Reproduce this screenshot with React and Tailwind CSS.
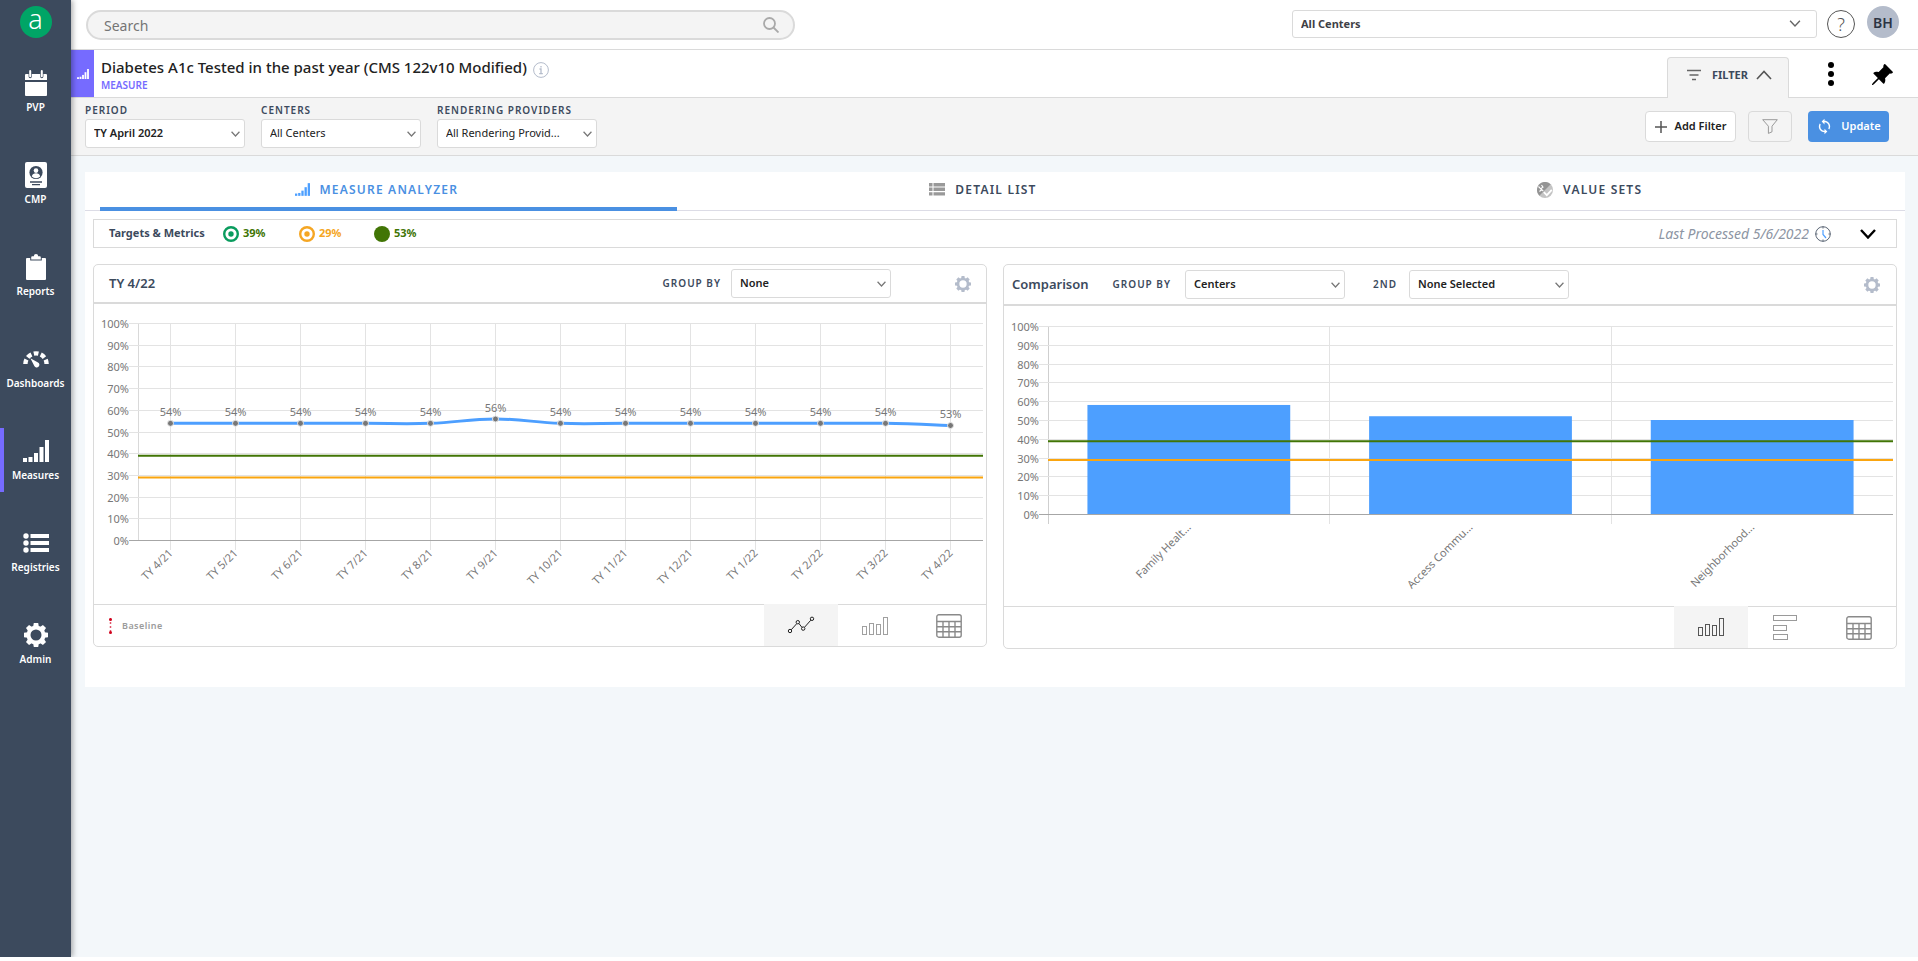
import { useEffect, useRef, useState } from "react";
import { BsPinAngleFill } from "react-icons/bs";
import { MdSync } from "react-icons/md";

/* ---------- icons ---------- */

function SignalIcon({ className }) {
  return (
    <svg viewBox="0 0 26 22" className={className} fill="currentColor" aria-hidden="true">
      <rect x="0" y="18" width="4" height="4" />
      <rect x="5.5" y="17" width="4" height="5" />
      <rect x="11" y="13" width="4" height="9" />
      <rect x="16.5" y="7" width="4" height="15" />
      <rect x="22" y="0" width="4" height="22" />
    </svg>
  );
}

function GearIcon({ className }) {
  return (
    <svg viewBox="0 0 24 24" className={className} fill="currentColor" aria-hidden="true">
      <circle cx="12" cy="12" r="7.5" fill="none" stroke="currentColor" strokeWidth="4" />
      {[0, 45, 90, 135, 180, 225, 270, 315].map((a) => (
        <path key={a} d="M9.2 3.600 9.800 0h4.400l.6 3.600z" transform={`rotate(${a} 12 12)`} />
      ))}
    </svg>
  );
}

function CalendarIcon() {
  return (
    <svg viewBox="0 0 22 26" className="h-[26px] w-[22px]" fill="currentColor" aria-hidden="true">
      <path d="M1 4h2.6v2.6a1.6 1.6 0 0 0 3.2 0V4h8.4v2.6a1.6 1.6 0 0 0 3.2 0V4H21a1 1 0 0 1 1 1v5H0V5a1 1 0 0 1 1-1z" />
      <rect x="4.2" y="0" width="2" height="7.2" rx="1" />
      <rect x="15.8" y="0" width="2" height="7.2" rx="1" />
      <path d="M0 12h22v13a1 1 0 0 1-1 1H1a1 1 0 0 1-1-1z" />
    </svg>
  );
}

function ContactCardIcon() {
  return (
    <svg viewBox="0 0 22 26" className="h-[26px] w-[22px]" aria-hidden="true">
      <rect width="22" height="26" rx="2" fill="currentColor" />
      <circle cx="11" cy="10.5" r="6.6" fill="#3c4a5d" />
      <circle cx="11" cy="8.6" r="2.3" fill="currentColor" />
      <path d="M6.8 14.6c.4-2.4 2-3.4 4.2-3.4s3.8 1 4.2 3.4a6.2 6.2 0 0 1-8.4 0z" fill="currentColor" />
      <path d="M5 20h12M7 22.6h8" stroke="#3c4a5d" strokeWidth="1.3" />
    </svg>
  );
}

function ClipboardIcon() {
  return (
    <svg viewBox="0 0 20 26" className="h-[26px] w-[20px]" fill="currentColor" aria-hidden="true">
      <path d="M1 4h3.2v2.6h11.6V4H19a1 1 0 0 1 1 1v20a1 1 0 0 1-1 1H1a1 1 0 0 1-1-1V5a1 1 0 0 1 1-1z" />
      <path d="M5.2 5.6V3.2a1 1 0 0 1 1-1h1.6a2.2 2.2 0 0 1 4.4 0h1.6a1 1 0 0 1 1 1v2.4z" />
    </svg>
  );
}

function GaugeIcon() {
  return (
    <svg viewBox="0 0 26 20" className="h-[20px] w-[26px]" fill="currentColor" aria-hidden="true">
      <path d="M2.4 15a10.6 10.6 0 0 1 21.200 0" fill="none" stroke="currentColor" strokeWidth="4.4" strokeDasharray="4.700 2.450" />
      <path d="M7.4 9.2l7.6 4.2a2.7 2.7 0 1 1-3.8 3.4z" />
    </svg>
  );
}

function ListIcon() {
  return (
    <svg viewBox="0 0 26 20" className="h-[20px] w-[26px]" fill="currentColor" aria-hidden="true">
      {[3, 10, 17].map((y) => (
        <g key={y}>
          <circle cx="3" cy={y} r="2.7" />
          <rect x="7.5" y={y - 2} width="18.5" height="4" />
        </g>
      ))}
    </svg>
  );
}

function Chevron({ className, up, width = 1.6 }) {
  return (
    <svg viewBox="0 0 16 10" className={className} fill="none" stroke="currentColor" strokeWidth={width} aria-hidden="true">
      <path d={up ? "M1 9l7-7.5L15 9" : "M1 1l7 7.5L15 1"} />
    </svg>
  );
}

function TableIcon() {
  return (
    <svg viewBox="0 0 26 24" className="h-[24px] w-[26px]" fill="none" stroke="#8a8a8a" strokeWidth="1.4" aria-hidden="true">
      <rect x="0.8" y="0.8" width="24.4" height="22.4" rx="2" />
      <path d="M1 7.5h24M1 12.7h24M1 17.8h24M7 7.5V23M13 7.5V23M19 7.5V23" />
    </svg>
  );
}

function ColumnsIcon({ className }) {
  return (
    <svg viewBox="0 0 26 18" className={className} fill="none" stroke="currentColor" strokeWidth="1" aria-hidden="true">
      <rect x="0.5" y="9.5" width="4" height="8" />
      <rect x="7.5" y="6.5" width="4" height="11" />
      <rect x="14.5" y="7.5" width="4" height="10" />
      <rect x="21.5" y="0.5" width="4" height="17" />
    </svg>
  );
}

function RowsIcon() {
  return (
    <svg viewBox="0 0 24 26" className="h-[26px] w-[24px]" fill="none" stroke="#9a9a9a" strokeWidth="1" aria-hidden="true">
      <rect x="0.5" y="0.5" width="23" height="5" />
      <rect x="0.5" y="10.5" width="13" height="5" />
      <rect x="0.5" y="19.5" width="14" height="5" />
    </svg>
  );
}

function LineIcon() {
  return (
    <svg viewBox="0 0 28 18" className="h-[18px] w-[28px]" fill="none" stroke="#222" strokeWidth="1" aria-hidden="true">
      <path d="M4.2 13.800l5.400-6M12 7.600l3 3.800M17.600 11.200l6.200-7" />
      <circle cx="3" cy="15" r="1.700" />
      <circle cx="10.800" cy="6.200" r="1.700" />
      <circle cx="16.200" cy="12.600" r="1.700" />
      <circle cx="25" cy="2.800" r="1.700" />
    </svg>
  );
}

/* ---------- form pieces ---------- */

function SelectBox({ id, value, bold }) {
  return (
    <div className="relative w-[160px]">
      <select
        id={id}
        className={
          "h-[29px] w-full appearance-none truncate rounded-[3px] border border-[#dadada] bg-white pr-7 pl-2 text-[11px] text-[#222] " +
          (bold ? "font-semibold" : "font-normal")
        }
      >
        <option>{value}</option>
      </select>
      <Chevron className="pointer-events-none absolute top-3 right-[5px] h-[6px] w-[9px] text-[#777]" width={2.2} />
    </div>
  );
}

const labelClass = "text-[10px] font-semibold uppercase tracking-widest text-[#3c4a5d]";

function Field({ id, label, value, bold }) {
  return (
    <div className="flex flex-col">
      <label htmlFor={id} className={labelClass + " leading-[15px]"}>
        {label}
      </label>
      <div className="mt-px">
        <SelectBox id={id} value={value} bold={bold} />
      </div>
    </div>
  );
}

/* ---------- charts ---------- */

function useWidth(initial) {
  const ref = useRef(null);
  const [width, setWidth] = useState(initial);
  useEffect(() => {
    const observer = new ResizeObserver(([entry]) => setWidth(Math.round(entry.contentRect.width)));
    observer.observe(ref.current);
    return () => observer.disconnect();
  }, []);
  return [ref, width];
}

const TICKS = [100, 90, 80, 70, 60, 50, 40, 30, 20, 10, 0];
const AXIS = 44;

function Grid({ top, height, right }) {
  return TICKS.map((t) => {
    const y = Math.round(top + (height * (100 - t)) / 100) + 0.5;
    return (
      <g key={t}>
        <path d={`M${AXIS - 9} ${y}H${right}`} stroke={t === 0 ? "#a6a6a6" : "#e3e3e3"} />
        <text x={AXIS - 9} y={y + 4} textAnchor="end">{t}%</text>
      </g>
    );
  });
}

function Targets({ top, height, right }) {
  const at = (v) => top + (height * (100 - v)) / 100;
  return (
    <>
      <path d={`M${AXIS} ${at(39) + 0.5}H${right}`} stroke="#417505" strokeWidth="2" />
      <path d={`M${AXIS} ${at(29) + 0.5}H${right}`} stroke="#faa50f" strokeWidth="2" />
    </>
  );
}

const MONTHS = [
  ["TY 4/21", 54], ["TY 5/21", 54], ["TY 6/21", 54], ["TY 7/21", 54], ["TY 8/21", 54], ["TY 9/21", 56], ["TY 10/21", 54],
  ["TY 11/21", 54], ["TY 12/21", 54], ["TY 1/22", 54], ["TY 2/22", 54], ["TY 3/22", 54], ["TY 4/22", 53],
];

function LineChart() {
  const [ref, width] = useWidth(892);
  const top = 19;
  const height = 217;
  const right = width - 3;
  const step = (right - AXIS) / MONTHS.length;
  const pts = MONTHS.map(([, v], i) => [AXIS + step * (i + 0.5), top + 0.5 + (height * (100 - v)) / 100]);
  const slope = pts.map((p, i) => {
    const a = pts[i - 1] || p;
    const b = pts[i + 1] || p;
    return [(b[0] - a[0]) * 0.2, (b[1] - a[1]) * 0.2];
  });
  let d = `M${pts[0][0]} ${pts[0][1]}`;
  for (let i = 1; i < pts.length; i++) {
    const [a, b, s, e] = [pts[i - 1], pts[i], slope[i - 1], slope[i]];
    d += `C${a[0] + s[0]} ${a[1] + s[1]} ${b[0] - e[0]} ${b[1] - e[1]} ${b[0]} ${b[1]}`;
  }
  return (
    <div ref={ref} className="h-[300px] w-full">
      <svg width="100%" height="300" className="block text-[11px]" fill="#777777" role="img" aria-label="Measure trend by trailing year">
        <path d={`M${AXIS + 0.5} ${top}V${top + height}`} stroke="#d9d9d9" />
        {pts.map(([x]) => (
          <path key={x} d={`M${Math.floor(x) + 0.5} ${top}V${top + height + 10}`} stroke="#e3e3e3" />
        ))}
        <Grid top={top} height={height} right={right} />
        <Targets top={top} height={height} right={right} />
        <path d={d} fill="none" stroke="#4d9fff" strokeWidth="3" />
        {pts.map(([x, y], i) => (
          <g key={x}>
            <circle cx={x} cy={y} r="3" stroke="#e6e6e6" />
            <text x={x} y={y - 7} textAnchor="middle">{MONTHS[i][1]}%</text>
            <text transform={`translate(${x} ${top + height + 11}) rotate(-45)`} y="4" textAnchor="end">
              {MONTHS[i][0]}
            </text>
          </g>
        ))}
      </svg>
    </div>
  );
}

const CENTERS = [["Family Healt...", 58], ["Access Commu...", 52], ["Neighborhood...", 50]];

function BarChart() {
  const [ref, width] = useWidth(892);
  const top = 20;
  const height = 188;
  const right = width - 3;
  const step = (right - AXIS) / CENTERS.length;
  return (
    <div ref={ref} className="h-[300px] w-full">
      <svg width="100%" height="300" className="block text-[11px]" fill="#777777" role="img" aria-label="Comparison by center">
        {[0, 1, 2].map((i) => (
          <path key={i} d={`M${Math.floor(AXIS + step * i) + 0.5} ${top}V${top + height + 10}`} stroke={i ? "#e3e3e3" : "#cfcfcf"} />
        ))}
        <Grid top={top} height={height} right={right} />
        {CENTERS.map(([name, v], i) => {
          const x = AXIS + step * (i + 0.5);
          const h = (height * v) / 100;
          return (
            <g key={name}>
              <rect x={x - step * 0.36} y={top + height - h} width={step * 0.72} height={h} fill="#4d9fff" />
              <text transform={`translate(${x} ${top + height + 11}) rotate(-45)`} y="4" textAnchor="end">
                {name}
              </text>
            </g>
          );
        })}
        <Targets top={top} height={height} right={right} />
      </svg>
    </div>
  );
}

/* ---------- page parts ---------- */

const NAV = [
  ["PVP", <CalendarIcon />],
  ["CMP", <ContactCardIcon />],
  ["Reports", <ClipboardIcon />],
  ["Dashboards", <GaugeIcon />],
  ["Measures", <SignalIcon className="h-[22px] w-[26px]" />],
  ["Registries", <ListIcon />],
  ["Admin", <GearIcon className="h-[24px] w-[24px]" />],
];

function Sidebar() {
  return (
    <nav className="z-10 flex w-[71px] shrink-0 flex-col items-center bg-[#3c4a5d] pt-[6px] shadow-[2px_0_5px_rgba(0,0,0,0.3)]">
      <a href="#home" aria-label="Home" className="flex h-8 w-8 items-center justify-center rounded-full bg-[#00a566] text-white">
        <span className="pb-[6px] text-[27px] leading-6 font-light">a</span>
      </a>
      <div className="mt-[22px] flex w-full flex-col gap-7">
        {NAV.map(([label, icon]) => (
          <a
            key={label}
            href={"#" + label.toLowerCase()}
            className={
              "flex h-16 flex-col items-center border-x-4 border-r-transparent pt-2 text-white " +
              (label === "Measures" ? "border-l-[#766bff]" : "border-l-transparent")
            }
          >
            <span className="flex h-[30px] items-center">{icon}</span>
            <span className="text-[10px] leading-[18px] font-semibold">{label}</span>
          </a>
        ))}
      </div>
    </nav>
  );
}

function TopBar() {
  return (
    <header className="flex h-[50px] items-start border-b border-[#dadada] bg-white pr-[19px] pl-[15px]">
      <div className="relative mt-[10px] w-[709px]">
        <input
          type="search"
          aria-label="Search"
          placeholder="Search"
          className="h-[30px] w-full rounded-full border-2 border-[#dadada] bg-[#f4f4f4] px-4 text-[14px] text-[#444] placeholder:text-[#757575]"
        />
        <svg viewBox="0 0 16 16" className="absolute top-[7px] right-4 h-4 w-4" fill="none" stroke="#a9a9a9" strokeWidth="1.8" aria-hidden="true">
          <circle cx="6.5" cy="6.5" r="5.5" />
          <path d="M10.5 10.5l5 5" />
        </svg>
      </div>
      <div className="relative mt-[10px] ml-auto w-[525px]">
        <select aria-label="Center" className="h-[28px] w-full appearance-none rounded-[3px] border border-[#dadada] bg-white px-2 text-[11px] font-bold text-[#3f3f46]">
          <option>All Centers</option>
        </select>
        <Chevron className="pointer-events-none absolute top-[10px] right-4 h-[7px] w-[12px] text-[#666]" width={2} />
      </div>
      <button type="button" aria-label="Help" className="mt-[10px] ml-[10px] flex h-7 w-7 items-center justify-center rounded-full border border-[#555] text-[18px] font-light text-[#555]">
        ?
      </button>
      <button type="button" className="mt-[6px] ml-[12px] h-8 w-8 rounded-full bg-[#b4bccb] text-[14px] font-semibold text-[#2c3444]">
        BH
      </button>
    </header>
  );
}

function TitleBar() {
  return (
    <div className="flex h-[48px] border-b border-[#dadada] bg-white pr-6">
      <div className="flex w-[23px] items-center justify-center bg-[#766bff] text-white">
        <SignalIcon className="h-[10px] w-[12px]" />
      </div>
      <div className="pt-[5px] pl-[7px]">
        <div className="flex items-center gap-[6px]">
          <h1 className="text-[15px] leading-6 font-medium text-[#222]">Diabetes A1c Tested in the past year (CMS 122v10 Modified)</h1>
          <svg viewBox="0 0 16 16" className="mt-[5px] h-4 w-4" fill="none" stroke="#b4bccb" aria-label="Information" role="img">
            <circle cx="8" cy="8" r="7.4" />
            <path d="M6.5 7H8v4.5M6.2 11.7h3.600M8 4v1.400" strokeWidth="1.3" />
          </svg>
        </div>
        <p className="text-[10px] leading-3 font-semibold text-[#766bff]">MEASURE</p>
      </div>
      <div className="ml-auto flex">
        <button
          type="button"
          aria-expanded="true"
          className="mt-[7px] mb-[-1px] flex h-[41px] w-[122px] items-center justify-center gap-[8px] rounded-t-[4px] border border-b-0 border-[#dadada] bg-[#f4f4f4] pb-[6px] pl-[3px] text-[11px] font-bold text-[#3c4a5d]"
        >
          <svg viewBox="0 0 14 12" className="mr-[3px] h-[12px] w-[14px]" fill="none" stroke="#666" strokeWidth="1.4" aria-hidden="true">
            <path d="M0 1.5h14M2.5 6h9M5 10.5h4" />
          </svg>
          FILTER
          <Chevron up className="h-[10px] w-[16px] text-[#555]" />
        </button>
        <button type="button" aria-label="More options" className="mt-[10px] ml-[36px] h-7 w-3">
          <svg viewBox="0 0 12 28" className="h-7 w-3" aria-hidden="true">
            <circle cx="6" cy="5" r="3" />
            <circle cx="6" cy="14" r="3" />
            <circle cx="6" cy="23" r="3" />
          </svg>
        </button>
        <button type="button" aria-label="Pin" className="mt-[13px] ml-[33px] h-6 w-6 text-black">
          <BsPinAngleFill className="h-6 w-6" />
        </button>
      </div>
    </div>
  );
}

function FilterBar() {
  return (
    <div className="flex h-[58px] items-start gap-4 border-b border-[#dadada] bg-[#f4f4f4] pt-[5px] pr-[29px] pl-[14px]">
      <Field id="period" label="Period" value="TY April 2022" bold />
      <Field id="centers" label="Centers" value="All Centers" />
      <Field id="providers" label="Rendering Providers" value="All Rendering Provid..." />
      <div className="mt-2 ml-auto flex">
        <button type="button" className="flex h-[31px] w-[91px] items-center justify-center gap-2 rounded-[4px] border border-[#dadada] bg-white text-[11px] font-semibold text-[#222]">
          <svg viewBox="0 0 12 12" className="h-3 w-3" stroke="#555" strokeWidth="1.5" aria-hidden="true">
            <path d="M6 0v12M0 6h12" />
          </svg>
          Add Filter
        </button>
        <button type="button" aria-label="Saved filters" className="ml-3 flex h-[31px] w-[44px] items-center justify-center rounded-[4px] border border-[#dadada]">
          <svg viewBox="0 0 16 15" className="h-[15px] w-4" fill="none" stroke="#999" strokeLinejoin="round" aria-hidden="true">
            <path d="M.7.7h14.6L10 7.2v5.6l-3.600 1.600V7.2z" />
          </svg>
        </button>
        <button type="button" className="ml-4 flex h-[31px] w-[81px] items-center justify-center gap-2 rounded-[4px] bg-[#4a90e2] text-[11px] font-semibold text-white">
          <MdSync className="h-[17px] w-[17px]" aria-hidden="true" />
          Update
        </button>
      </div>
    </div>
  );
}

const TABS = [
  ["Measure Analyzer", <SignalIcon className="h-[13px] w-[15px] text-[#4d9fff]" />],
  [
    "Detail List",
    <svg viewBox="0 0 16 13" className="h-[13px] w-4" fill="#999" aria-hidden="true">
      <path d="M0 0h3.5v3.4H0zM4.5 0H16v3.4H4.5zM0 4.6h3.5V8H0zM4.5 4.6H16V8H4.5zM0 9.2h3.5v3.4H0zM4.5 9.2H16v3.4H4.5z" />
    </svg>,
  ],
  [
    "Value Sets",
    <svg viewBox="0 0 16 16" className="h-4 w-4" aria-hidden="true">
      <circle cx="8" cy="8" r="8" fill="#c4c4c4" />
      <path d="M2.3 13.7A8 8 0 0 1 13.7 2.3z" fill="#949494" />
      <path d="M1.500 4.500l2.200 2.300L6 5.200 4.500 3M2.500 9.500l2.200-2 1.600 1.600" fill="none" stroke="#fff" strokeWidth="1.1" />
      <path d="M6.800 10.200l3 3 5-5.400" fill="none" stroke="#fff" strokeWidth="1.8" />
    </svg>,
  ],
];

function Tabs() {
  return (
    <div role="tablist" className="grid grid-cols-3 border-b border-[#dcdce6]">
      {TABS.map(([label, icon], i) => (
        <div key={label} className="-mb-px px-[15px]">
          <button
            type="button"
            role="tab"
            aria-selected={i === 0}
            className={
              "flex h-[39px] w-full items-center justify-center gap-[10px] border-b-4 pr-6 text-[12px] font-semibold uppercase tracking-widest " +
              (i === 0 ? "border-[#4a90e2] text-[#4a90e2]" : "border-transparent text-[#3c4a5d]")
            }
          >
            {icon}
            {label}
          </button>
        </div>
      ))}
    </div>
  );
}

function Ring({ color }) {
  return (
    <svg viewBox="0 0 16 16" className="h-4 w-4" aria-hidden="true">
      <circle cx="8" cy="8" r="6.8" fill="none" stroke={color} strokeWidth="2.4" />
      <circle cx="8" cy="8" r="2.7" fill={color} />
    </svg>
  );
}

function TargetsBar() {
  return (
    <section className="mx-2 mt-2 flex h-[29px] items-center border border-[#dadada] pr-5 pl-[15px] text-[11px] font-bold">
      <h2 className="w-[114px] text-[#3c4a5d]">Targets &amp; Metrics</h2>
      <span className="flex w-[76px] items-center gap-1 text-[#417505]">
        <Ring color="#0a9c5e" />
        39%
      </span>
      <span className="flex w-[75px] items-center gap-1 text-[#f5a623]">
        <Ring color="#f5a623" />
        29%
      </span>
      <span className="flex items-center gap-1 text-[#417505]">
        <span className="h-4 w-4 rounded-full bg-[#417505]" />
        53%
      </span>
      <span className="ml-auto text-[14px] font-normal text-[#8d95a3] italic">Last Processed 5/6/2022</span>
      <svg viewBox="0 0 16 16" className="ml-[6px] h-4 w-4" fill="none" aria-hidden="true">
        <circle cx="8" cy="8" r="7.3" stroke="#5b6675" strokeWidth="1" />
        <path d="M8 .5v2M8 13.5v2M.5 8h2M13.500 8h2" stroke="#5b6675" />
        <path d="M8 4v4.500l3 3.500" stroke="#4d9fff" strokeWidth="1.2" />
      </svg>
      <button type="button" aria-label="Show metrics" className="ml-[29px] text-black">
        <Chevron className="h-[10px] w-4" width={2.4} />
      </button>
    </section>
  );
}

function ViewButton({ label, active, children }) {
  return (
    <button
      type="button"
      aria-label={label}
      aria-pressed={!!active}
      className={"flex w-[74px] items-center justify-center " + (active ? "-mt-px bg-[#f4f4f4]" : "")}
    >
      {children}
    </button>
  );
}

function Card({ header, children, footer }) {
  return (
    <section className="min-w-0 flex-1 overflow-hidden rounded-[5px] border border-[#dadada]">
      {header}
      {children}
      <div className="flex h-[42px] border-t border-[#dadada]">{footer}</div>
    </section>
  );
}

function SettingsButton() {
  return (
    <button type="button" aria-label="Chart settings" className="text-[#b4bccb]">
      <GearIcon className="h-4 w-4" />
    </button>
  );
}

export default function App() {
  return (
    <div className="flex min-h-[calc(100vh-4px)] bg-[#f3f7fa] font-['Noto_Sans',sans-serif]">
      <Sidebar />
      <div className="min-w-0 flex-1">
        <TopBar />
        <TitleBar />
        <FilterBar />
        <main className="mt-4 mr-[13px] ml-[14px] bg-white pb-[38px]">
          <Tabs />
          <TargetsBar />
          <div className="mx-2 mt-4 flex items-start gap-4">
            <Card
              header={
                <div className="flex h-[39px] items-center border-b-2 border-[#dadada] pr-[15px] pl-[15px]">
                  <h2 className="text-[13px] font-semibold text-[#3c4a5d]">TY 4/22</h2>
                  <label htmlFor="trend-group" className={labelClass + " ml-auto mr-[10px]"}>
                    Group by
                  </label>
                  <SelectBox id="trend-group" value="None" bold />
                  <div className="ml-16 flex">
                    <SettingsButton />
                  </div>
                </div>
              }
              footer={
                <>
                  <div className="flex flex-1 items-center gap-[10px] pl-[15px] text-[9px] font-semibold tracking-wider text-[#9b9b9b]">
                    <svg viewBox="0 0 3 16" className="h-4 w-[3px]" aria-hidden="true">
                      <path d="M1.5 0v16" stroke="#e0546a" strokeWidth="1.5" strokeDasharray="2 2" />
                      <circle cx="1.5" cy="1.5" r="1.5" fill="#d0021b" />
                      <circle cx="1.5" cy="14.5" r="1.5" fill="#d0021b" />
                    </svg>
                    Baseline
                  </div>
                  <ViewButton label="Line chart" active>
                    <LineIcon />
                  </ViewButton>
                  <ViewButton label="Column chart">
                    <ColumnsIcon className="h-[18px] w-[26px] text-[#a0a0a0]" />
                  </ViewButton>
                  <ViewButton label="Table">
                    <TableIcon />
                  </ViewButton>
                </>
              }
            >
              <LineChart />
            </Card>
            <Card
              header={
                <div className="flex h-[41px] items-center border-b-2 border-[#dadada] pr-4 pl-2">
                  <h2 className="text-[13px] font-semibold text-[#3c4a5d]">Comparison</h2>
                  <label htmlFor="compare-group" className={labelClass + " ml-6 mr-[14px]"}>
                    Group by
                  </label>
                  <SelectBox id="compare-group" value="Centers" bold />
                  <label htmlFor="compare-second" className={labelClass + " ml-7 mr-3"}>
                    2nd
                  </label>
                  <SelectBox id="compare-second" value="None Selected" bold />
                  <div className="ml-auto flex">
                    <SettingsButton />
                  </div>
                </div>
              }
              footer={
                <>
                  <div className="flex-1" />
                  <ViewButton label="Column chart" active>
                    <ColumnsIcon className="h-[18px] w-[26px] text-[#555]" />
                  </ViewButton>
                  <ViewButton label="Bar chart">
                    <RowsIcon />
                  </ViewButton>
                  <ViewButton label="Table">
                    <TableIcon />
                  </ViewButton>
                </>
              }
            >
              <BarChart />
            </Card>
          </div>
        </main>
      </div>
    </div>
  );
}
